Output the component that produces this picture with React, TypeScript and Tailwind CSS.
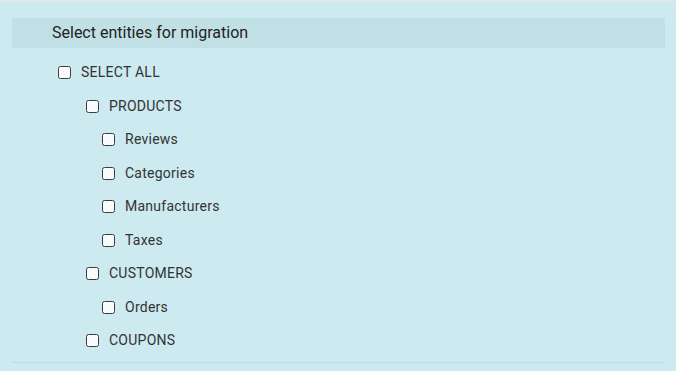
import React, { useState } from 'react';

type Entity = { id: string; label: string; level: number };

const ENTITIES: Entity[] = [
  { id: 'all', label: 'SELECT ALL', level: 0 },
  { id: 'products', label: 'PRODUCTS', level: 1 },
  { id: 'reviews', label: 'Reviews', level: 2 },
  { id: 'categories', label: 'Categories', level: 2 },
  { id: 'manufacturers', label: 'Manufacturers', level: 2 },
  { id: 'taxes', label: 'Taxes', level: 2 },
  { id: 'customers', label: 'CUSTOMERS', level: 1 },
  { id: 'orders', label: 'Orders', level: 2 },
  { id: 'coupons', label: 'COUPONS', level: 1 },
];

const indent = ['pl-[46px]', 'pl-[74px]', 'pl-[90px]'];

const App: React.FC = () => {
  const [checked, setChecked] = useState<Record<string, boolean>>({});

  return (
    <div
      className="w-[676px] h-[371px] bg-[#cdeaf0] border-t-2 border-[#e3e6e7] px-3 overflow-hidden"
      style={{ fontFamily: 'Roboto, "Liberation Sans", sans-serif' }}
    >
      <div className="mt-4 h-[30px] w-[653px] bg-[#c1e0e5] flex items-center pl-10 text-[16px] text-[#222]">
        Select entities for migration
      </div>

      <ul className="mt-[8px] w-[653px] border-b border-[#bcdde3] pb-[4px]">
        {ENTITIES.map((e) => (
          <li key={e.id} className={`h-[33.5px] flex items-center ${indent[e.level]}`}>
            <label className="flex items-center gap-[10px] cursor-pointer">
              <input
                type="checkbox"
                checked={!!checked[e.id]}
                onChange={() => setChecked((c) => ({ ...c, [e.id]: !c[e.id] }))}
                className="appearance-none w-[13px] h-[13px] rounded-[2.5px] border-[1.5px] border-[#3c3c3c] bg-[#f7fbfc] checked:bg-[#3c3c3c]"
              />
              <span className="text-[14px] text-[#333] tracking-[0.25px]">{e.label}</span>
            </label>
          </li>
        ))}
      </ul>
    </div>
  );
};

export default App;
